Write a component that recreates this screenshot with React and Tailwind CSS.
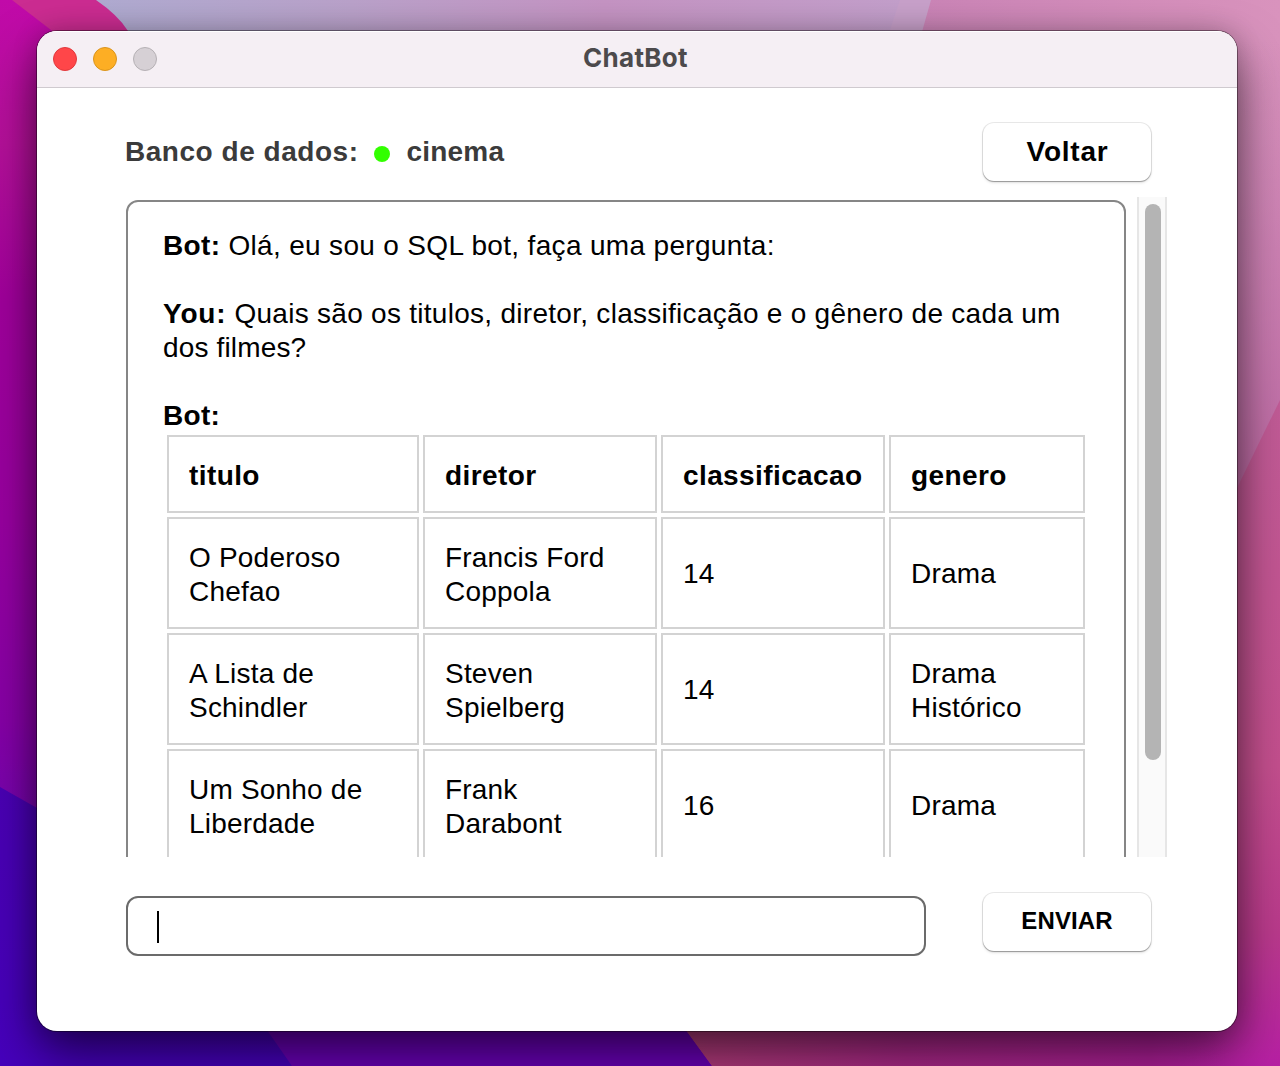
const HEADERS = ["titulo", "diretor", "classificacao", "genero"];

const ROWS = [
  [["O Poderoso", "Chefao"], ["Francis Ford", "Coppola"], ["14"], ["Drama"]],
  [["A Lista de", "Schindler"], ["Steven", "Spielberg"], ["14"], ["Drama", "Histórico"]],
  [["Um Sonho de", "Liberdade"], ["Frank", "Darabont"], ["16"], ["Drama"]],
];

function Wallpaper() {
  return (
    <svg className="absolute inset-0 h-full w-full" viewBox="0 0 1280 1066" preserveAspectRatio="none">
      <defs>
        <linearGradient id="left" x1="0" y1="0" x2="0" y2="800" gradientUnits="userSpaceOnUse">
          <stop offset="0" stopColor="#c10aa9" />
          <stop offset="0.18" stopColor="#b5109a" />
          <stop offset="0.38" stopColor="#a0009c" />
          <stop offset="0.65" stopColor="#9800a0" />
          <stop offset="0.9" stopColor="#8600a6" />
          <stop offset="1" stopColor="#7804ac" />
        </linearGradient>
        <linearGradient id="top" x1="100" y1="0" x2="940" y2="0" gradientUnits="userSpaceOnUse">
          <stop offset="0" stopColor="#afaad0" />
          <stop offset="0.3" stopColor="#b9a1c9" />
          <stop offset="0.6" stopColor="#c493c2" />
          <stop offset="1" stopColor="#c2a0cb" />
        </linearGradient>
        <linearGradient id="pink" x1="920" y1="0" x2="1280" y2="0" gradientUnits="userSpaceOnUse">
          <stop offset="0" stopColor="#ca84b6" />
          <stop offset="1" stopColor="#d993bd" />
        </linearGradient>
        <linearGradient id="pinkSide" x1="0" y1="40" x2="0" y2="480" gradientUnits="userSpaceOnUse">
          <stop offset="0" stopColor="#c270ad" stopOpacity="0" />
          <stop offset="1" stopColor="#bd6aa3" />
        </linearGradient>
        <linearGradient id="rose" x1="0" y1="400" x2="0" y2="1066" gradientUnits="userSpaceOnUse">
          <stop offset="0" stopColor="#c25c97" />
          <stop offset="0.55" stopColor="#c44f8e" />
          <stop offset="0.8" stopColor="#ba3a8c" />
          <stop offset="1" stopColor="#b71fa4" />
        </linearGradient>
        <linearGradient id="base" x1="690" y1="0" x2="1230" y2="0" gradientUnits="userSpaceOnUse">
          <stop offset="0" stopColor="#b53d7c" />
          <stop offset="0.4" stopColor="#ac2889" />
          <stop offset="0.85" stopColor="#af1f98" />
          <stop offset="1" stopColor="#b71fa4" stopOpacity="0" />
        </linearGradient>
        <linearGradient id="blue" x1="0" y1="780" x2="0" y2="1066" gradientUnits="userSpaceOnUse">
          <stop offset="0" stopColor="#4a00b4" />
          <stop offset="1" stopColor="#4600bc" />
        </linearGradient>
      </defs>
      <rect width="1280" height="1066" fill="url(#left)" />
      <path d="M12 0H98Q116 12 132 36L136 60H90Z" fill="#cb2c91" />
      <path d="M96 0H1280V100H160L128 31Q118 15 96 0Z" fill="url(#top)" />
      <path d="M900 0H940L918 60H880Z" fill="#c7a0c9" />
      <path d="M931 0H1280V560H1200V60H914Z" fill="url(#pink)" />
      <path d="M1200 40H1280V560H1200Z" fill="url(#pinkSide)" />
      <path d="M1280 400L1237 488L1200 560V1000H664L712 1066H1280Z" fill="url(#rose)" />
      <path d="M0 787L37 808L100 850V1000H270L292 1066H0Z" fill="url(#blue)" />
      <path d="M246 1000L292 1066H712L664 1000Z" fill="#6a00b8" />
      <path d="M664 1000L712 1066H1230V1000Z" fill="url(#base)" />
    </svg>
  );
}

function TitleBar() {
  return (
    <div className="grid h-[57px] shrink-0 grid-cols-[1fr_auto_1fr] items-center border-b border-[#cfcacf] bg-[#f5eff4] shadow-[inset_0_1px_0_#ffffff]">
      <div className="flex gap-4 pl-4">
        <span className="size-6 rounded-full border border-[#e0383c] bg-[#ff4649]" />
        <span className="size-6 rounded-full border border-[#d9931c] bg-[#fdae24]" />
        <span className="size-6 rounded-full border border-[#b5b0b4] bg-[#d6d0d5]" />
      </div>
      <h1 className="mr-[3px] mb-0.5 text-[26px] leading-8 font-bold text-[#4c4a4c] font-['Inter',sans-serif] tracking-[0.3px]">
        ChatBot
      </h1>
    </div>
  );
}

function PushButton({ children, className }) {
  return (
    <button
      className={`flex h-[58px] w-[168px] justify-center rounded-[11px] bg-white font-bold text-black shadow-[0_0_0_1px_rgba(0,0,0,0.09),0_1px_1px_rgba(0,0,0,0.28),0_2px_3px_rgba(0,0,0,0.1)] ${className}`}
    >
      {children}
    </button>
  );
}

function Cell({ as: Tag = "td", lines, className = "" }) {
  return (
    <Tag className={`border-2 border-[#d3d3d3] px-5 text-left align-middle ${className}`}>
      {lines.map((line) => (
        <span key={line} className="block whitespace-nowrap">{line}</span>
      ))}
    </Tag>
  );
}

function ResultTable() {
  return (
    <table className="-mt-0.5 w-[926px] table-fixed border-separate border-spacing-1 tracking-[0.2px]">
      <colgroup>
        <col className="w-[252px]" />
        <col className="w-[234px]" />
        <col className="w-[224px]" />
        <col className="w-[196px]" />
      </colgroup>
      <thead>
        <tr className="h-[78px]">
          {HEADERS.map((h) => (
            <Cell key={h} as="th" lines={[h]} className="pt-1 font-bold tracking-[0.4px]" />
          ))}
        </tr>
      </thead>
      <tbody>
        {ROWS.map((row, i) => (
          <tr key={i} className="h-28">
            {row.map((lines, j) => (
              <Cell key={j} lines={lines} className={lines.length > 1 ? "pt-1" : "pt-0.5"} />
            ))}
          </tr>
        ))}
      </tbody>
    </table>
  );
}

export default function App() {
  return (
    <div className="relative h-[1066px] w-[1280px] overflow-hidden pt-[31px] pl-[37px] font-['Liberation_Sans',Arial,sans-serif]">
      <Wallpaper />
      <main className="relative flex h-[1000px] w-[1200px] flex-col rounded-[20px] bg-white shadow-[0_0_0_1px_rgba(0,0,0,0.4),0_24px_50px_rgba(0,0,0,0.55),0_0_26px_rgba(0,0,0,0.2)]">
        <div className="overflow-hidden rounded-t-[20px]">
          <TitleBar />
        </div>

        <header className="flex h-[109px] justify-between pt-[35px] pr-[86px] pl-[88px]">
          <div className="flex h-[58px] items-center text-[28px] leading-[34px] font-bold text-[#3b3b3b]">
            <span className="tracking-[0.53px]">Banco de dados:</span>
            <span className="mt-1 mr-[17px] ml-[15px] size-4 rounded-full bg-[#32ff00]" />
            <span className="tracking-[0.2px]">cinema</span>
          </div>
          <PushButton className="pt-[12px] pl-px text-[28px] leading-[34px] tracking-[0.75px]">Voltar</PushButton>
        </header>

        <section className="ml-[89px] flex h-[660px] w-[1041px] shrink-0 justify-between overflow-hidden">
          <div className="mt-[3px] h-[900px] w-[1000px] rounded-[12px] border-2 border-[#868686] pt-[27px] pl-[35px] text-[28px] leading-[34px] tracking-[0.28px] text-black">
            <p className="tracking-[0.33px]"><b>Bot:</b> Olá, eu sou o SQL bot, faça uma pergunta:</p>
            <p className="mt-[34px] whitespace-nowrap">
              <b className="tracking-[0.8px]">You:</b> Quais são os titulos, diretor, classificação e o gênero de cada um
              <br />
              <span className="tracking-[0.15px]">dos filmes?</span>
            </p>
            <p className="mt-[34px] font-bold">Bot:</p>
            <ResultTable />
          </div>
          <div className="flex w-[30px] border-x-2 border-[#e6e6e6] bg-[#fafafa] pt-[7px] pl-1.5">
            <div className="h-[556px] w-4 rounded-full bg-[#b4b4b4]" />
          </div>
        </section>

        <footer className="flex justify-between pt-[36px] pr-[86px] pl-[89px]">
          <div className="mt-[3px] flex h-[60px] w-[800px] items-center rounded-[12px] border-2 border-[#6b6b6b] pt-0.5 pl-[29px]">
            <span className="h-8 w-0.5 bg-black" />
          </div>
          <PushButton className="pt-[13px] text-[24px] leading-[30px] tracking-[0.1px]">ENVIAR</PushButton>
        </footer>
      </main>
    </div>
  );
}
